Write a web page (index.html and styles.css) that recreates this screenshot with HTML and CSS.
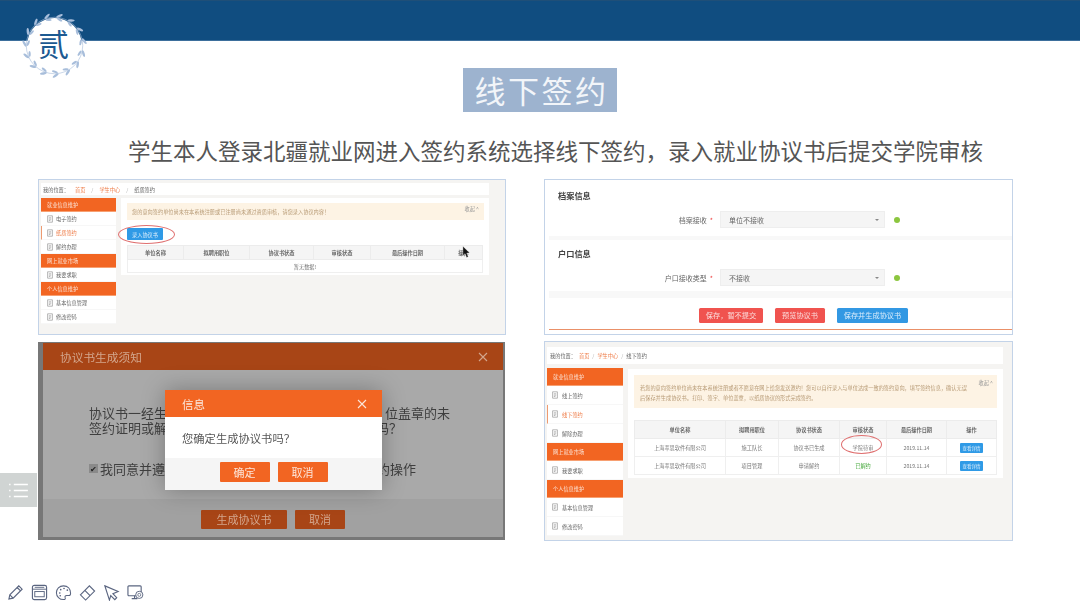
FILE: index.html
```html
<!DOCTYPE html>
<html lang="zh-CN">
<head>
<meta charset="utf-8">
<title>线下签约</title>
<link rel="stylesheet" href="styles.css">
</head>
<body>
<svg class="defs" width="0" height="0" aria-hidden="true">
  <defs>
    <symbol id="doc" viewBox="0 0 10 10"><path d="M2 1h6v8H2zM3.500 3.500h3M3.500 5.200h3M3.500 6.900h2" fill="none" stroke="#9a9a9a" stroke-width=".9"/></symbol>
    <symbol id="close" viewBox="0 0 10 10"><path d="M1 1l8 8M9 1l-8 8" fill="none" stroke="currentColor" stroke-width="1.100"/></symbol>
    <g id="leaves" fill="#a8bedb">
      <ellipse cx="37" cy="2.800" rx="3.400" ry="1.200" transform="rotate(-22 37 2.800)"/>
      <ellipse cx="37" cy="6.600" rx="3" ry="1.100" transform="rotate(28 37 6.600)"/>
    </g>
  </defs>
</svg>
<main class="slide">
  <header class="topbar"></header>
  <div class="badge">
    <svg class="wreath" viewBox="0 0 64 64" aria-hidden="true">
      <circle cx="32" cy="32" r="27" fill="#fff"/>
      <circle cx="32" cy="32" r="27.800" fill="none" stroke="#a8bedb" stroke-width=".6"/>
      <use href="#leaves"/>
      <use href="#leaves" transform="rotate(24 32 32)"/>
      <use href="#leaves" transform="rotate(48 32 32)"/>
      <use href="#leaves" transform="rotate(72 32 32)"/>
      <use href="#leaves" transform="rotate(96 32 32)"/>
      <use href="#leaves" transform="rotate(120 32 32)"/>
      <use href="#leaves" transform="rotate(144 32 32)"/>
      <use href="#leaves" transform="rotate(168 32 32)"/>
      <use href="#leaves" transform="rotate(192 32 32)"/>
      <use href="#leaves" transform="rotate(216 32 32)"/>
      <use href="#leaves" transform="rotate(240 32 32)"/>
      <use href="#leaves" transform="rotate(264 32 32)"/>
      <use href="#leaves" transform="rotate(288 32 32)"/>
      <use href="#leaves" transform="rotate(312 32 32)"/>
      <use href="#leaves" transform="rotate(336 32 32)"/>
    </svg>
    <span class="badge-text">贰</span>
  </div>

  <h1 class="title">线下签约</h1>
  <p class="subtitle">学生本人登录北疆就业网进入签约系统选择线下签约，录入就业协议书后提交学院审核</p>

  <section class="shots">
    <!-- 纸质签约 -->
    <article class="shot admin admin-a">
      <div class="crumb"><span>我的位置：</span><em>首页</em><i>/</i><em>学生中心</em><i>/</i><span>纸质签约</span></div>
      <div class="admin-body">
        <nav class="side">
          <h3>就业信息维护</h3>
          <a><svg><use href="#doc"/></svg>电子签约</a>
          <a class="on"><svg><use href="#doc"/></svg>纸质签约</a>
          <a><svg><use href="#doc"/></svg>解约办理</a>
          <h3>网上就业市场</h3>
          <a><svg><use href="#doc"/></svg>我要求职</a>
          <h3>个人信息维护</h3>
          <a><svg><use href="#doc"/></svg>基本信息管理</a>
          <a><svg><use href="#doc"/></svg>修改密码</a>
        </nav>
        <div class="card">
          <div class="notice"><p>您的意向签约单位尚未在本系统注册或已注册尚未通过资质审核，请您录入协议内容！</p><span>收起 ^</span></div>
          <button class="add">录入协议书</button>
          <table class="tbl">
            <thead><tr><th>单位名称</th><th>拟聘用职位</th><th>协议书状态</th><th>审核状态</th><th>最后操作日期</th><th>操作</th></tr></thead>
            <tbody><tr><td colspan="6">暂无数据!</td></tr></tbody>
          </table>
        </div>
      </div>
      <span class="ring ring-a"></span>
      <svg class="cursor" viewBox="0 0 10 14" aria-hidden="true"><path d="M1 0l0 10.500 2.400-2.200 1.700 4.200 1.900-.8-1.700-4 3.200-.2z" fill="#111" stroke="#fff" stroke-width=".4"/></svg>
    </article>

    <!-- 档案信息 / 户口信息 -->
    <article class="shot form">
      <div class="fsec fsec-a">
        <h4>档案信息</h4>
        <div class="frow">
          <label>档案接收<b>*</b></label>
          <div class="select"><span>单位不接收</span><i></i></div>
          <span class="ok"></span>
        </div>
      </div>
      <div class="fsec fsec-b">
        <h4>户口信息</h4>
        <div class="frow">
          <label>户口接收类型<b>*</b></label>
          <div class="select"><span>不接收</span><i></i></div>
          <span class="ok"></span>
        </div>
      </div>
      <div class="factions">
        <button class="fbtn red w1">保存，暂不提交</button>
        <button class="fbtn red w2">预览协议书</button>
        <button class="fbtn blue w3">保存并生成协议书</button>
      </div>
    </article>

    <!-- 协议书生成须知 -->
    <article class="shot modal-shot">
      <div class="modal">
        <div class="modal-head"><span>协议书生成须知</span><svg class="x"><use href="#close"/></svg></div>
        <div class="modal-body">
          <div class="mline l1"><span>协议书一经生</span><span>位盖章的未</span></div>
          <div class="mline l2"><span>签约证明或解</span><span>吗？</span></div>
          <div class="mline l3 agree"><span class="agree-left"><span class="check">✔</span>我同意并遵</span><span>约操作</span></div>
        </div>
        <div class="modal-foot"><button class="dim w86">生成协议书</button><button class="dim w50">取消</button></div>
      </div>
      <div class="dialog">
        <div class="dialog-head"><span>信息</span><svg class="x"><use href="#close"/></svg></div>
        <div class="dialog-body">您确定生成协议书吗？</div>
        <div class="dialog-foot"><button>确定</button><button>取消</button></div>
      </div>
    </article>

    <!-- 线下签约 -->
    <article class="shot admin admin-b">
      <div class="crumb"><span>我的位置：</span><em>首页</em><i>/</i><em>学生中心</em><i>/</i><span>线下签约</span></div>
      <div class="admin-body">
        <nav class="side">
          <h3>就业信息维护</h3>
          <a><svg><use href="#doc"/></svg>线上签约</a>
          <a class="on"><svg><use href="#doc"/></svg>线下签约</a>
          <a><svg><use href="#doc"/></svg>解除办理</a>
          <h3>网上就业市场</h3>
          <a><svg><use href="#doc"/></svg>我要求职</a>
          <h3>个人信息维护</h3>
          <a><svg><use href="#doc"/></svg>基本信息管理</a>
          <a><svg><use href="#doc"/></svg>修改密码</a>
        </nav>
        <div class="card">
          <div class="notice"><p>若您的意向签约单位尚未在本系统注册或者不愿意在网上给您发送邀约！您可以自行录入与单位达成一致的签约意向，填写签约信息，确认无误后保存并生成协议书。打印、签字、单位盖章，以纸质协议的形式完成签约。</p><span>收起 ^</span></div>
          <table class="tbl">
            <thead><tr><th>单位名称</th><th>拟聘用职位</th><th>协议书状态</th><th>审核状态</th><th>最后操作日期</th><th>操作</th></tr></thead>
            <tbody>
              <tr><td>上海萃思软件有限公司</td><td>施工队长</td><td>协议书已生成</td><td>学院待审</td><td>2019.11.14</td><td><button class="view">查看详情</button></td></tr>
              <tr><td>上海萃思软件有限公司</td><td>项目管理</td><td>申请解约</td><td class="green">已解约</td><td>2019.11.14</td><td><button class="view">查看详情</button></td></tr>
            </tbody>
          </table>
        </div>
      </div>
      <span class="ring ring-b"></span>
    </article>
  </section>

  <div class="tab" aria-hidden="true">
    <svg viewBox="0 0 20 16"><path d="M0 1.500h1.500M0 8h1.500M0 14.500h1.500M5 1.500h15M5 8h15M5 14.500h15" stroke="#fff" stroke-width="1.600" fill="none"/></svg>
  </div>

  <footer class="tools" aria-hidden="true">
    <svg viewBox="0 0 18 18"><path d="M2 16l1-4.500L12.500 2l3.500 3.500L6.500 15zM3 11.500L6.500 15M10.800 3.700l3.500 3.500" fill="none" stroke="#5a6580" stroke-width="1.200"/></svg>
    <svg viewBox="0 0 18 18"><rect x="1.500" y="1.500" width="15" height="15" rx="2" fill="none" stroke="#5a6580" stroke-width="1.200"/><path d="M1.500 5.500h15M4 3.500h10" stroke="#5a6580" fill="none"/><rect x="4" y="8" width="10" height="5.500" fill="none" stroke="#5a6580"/></svg>
    <svg viewBox="0 0 18 18"><path d="M9 2C4.500 2 1.500 5.200 1.500 9.200S4.800 16.500 9 16.500c2 0 2.200-1.200 1.700-2.300-.5-1.200.3-2 1.600-2h2.200c1.300 0 2-1 2-2.500C16.500 5 13.500 2 9 2z" fill="none" stroke="#5a6580" stroke-width="1.100"/><path d="M5 9.500h.1M6 6h.1M9.500 4.800h.1M13 6.500h.1M5.500 12.500h.1" stroke="#5a6580" stroke-width="1.700" stroke-linecap="round"/></svg>
    <svg viewBox="0 0 18 18"><path d="M1.500 11.500L11 2l5.500 5.500L7 17zM6.200 6.800l5.500 5.500" fill="none" stroke="#5a6580" stroke-width="1.200"/></svg>
    <svg viewBox="0 0 18 18"><path d="M2 2l14 6-5.500 2.200 4 4.300-2 2-4.300-4.300L6.800 17z" fill="none" stroke="#5a6580" stroke-width="1.200"/></svg>
    <svg viewBox="0 0 18 18"><rect x="1" y="2" width="14" height="10.500" rx="1" fill="none" stroke="#5a6580" stroke-width="1.200"/><path d="M8 12.500V15M5 15.500h6" stroke="#5a6580" stroke-width="1.200"/><circle cx="13" cy="11.500" r="3.800" fill="#fff" stroke="#5a6580"/><circle cx="13" cy="11.500" r="1.600" fill="none" stroke="#5a6580" stroke-width=".8"/></svg>
  </footer>
</main>
</body>
</html>
```
FILE: styles.css
```css
* { box-sizing: border-box; }
html, body { margin: 0; padding: 0; background: #fff; }
body { font-family: "Noto Sans CJK SC", "Liberation Sans", sans-serif; }
.defs { position: absolute; }

.slide { position: relative; width: 1080px; height: 608px; overflow: hidden; background: #fff; display: flex; flex-direction: column; }
.topbar { height: 41px; flex: none; background: #104d80; border-top: 1px solid #1f4f78; border-bottom: 1px solid #3d6f9c; }

.badge { position: absolute; left: 22px; top: 13px; width: 65px; height: 65px; display: flex; align-items: center; justify-content: center; }
.wreath { position: absolute; inset: 0; width: 100%; height: 100%; }
.badge-text { position: relative; font-size: 31px; font-weight: 400; line-height: 1; color: #1d5a92; top: -3px; left: -1px; }

.title { align-self: center; margin: 27px 0 0; width: 154px; height: 44px; background: #9db3cf; color: #f2f5f9; font-size: 31px; font-weight: 400; line-height: 44px; text-align: center; letter-spacing: 2.500px; padding-left: 3px; white-space: nowrap; }
.subtitle { margin: 23px 0 0 128px; height: 30px; font-size: 22.500px; line-height: 30px; color: #555; white-space: nowrap; }

.shots { margin: 14px 0 0 38px; display: grid; grid-template-columns: 468px 469px; grid-template-rows: 156px 200px; column-gap: 38px; row-gap: 6px; }
.shot { position: relative; border: 1px solid #c3d3e8; overflow: hidden; filter: blur(.45px); }

/* admin screens */
.admin { background: #f5f4f2; color: #666; font-size: 5.200px; }
.crumb { background: #fff; display: flex; align-items: center; gap: 3px; white-space: nowrap; }
.crumb em { font-style: normal; color: #ee7a45; }
.crumb i { font-style: normal; color: #aaa; }
.admin-body { display: flex; }
.side { flex: none; background: #fff; }
.side h3 { margin: 0; background: #f26522; color: #fbe4d8; font-size: 5.200px; font-weight: 400; display: flex; align-items: center; padding-left: 6px; border-bottom: 1px solid #f7a072; }
.side a { display: flex; align-items: center; gap: 2px; padding-left: 5px; border-bottom: 1px solid #f7f7f7; color: #666; }
.side a svg { width: 8px; height: 8px; flex: none; }
.side a.on { color: #ee7a45; border-left: 1px solid #ee9a70; padding-left: 4px; }
.card { background: #fff; }
.notice { position: relative; background: #fdf3e4; color: #b79a75; }
.notice p { margin: 0; }
.notice span { position: absolute; color: #999; }
.add { display: block; border: 0; padding: 0; border-radius: 1px; background: #2f9ae6; color: #e0f0fc; font: inherit; }
.tbl { border-collapse: collapse; table-layout: fixed; background: #fff; }
.tbl th { background: #f5f5f5; font-weight: 700; color: #666; border: 1px solid #ececec; padding: 0; }
.tbl td { text-align: center; border: 1px solid #efefef; padding: 0; color: #777; }
.tbl td.green { color: #3fa535; }
.view { display: inline-block; vertical-align: middle; border: 0; padding: 0; background: #2f9ae6; color: #d8ecfb; font: inherit; font-size: 4.500px; border-radius: 1px; }
.ring { position: absolute; border: 1px solid #df6f6f; border-radius: 50%; }

.admin-a { padding: 3px 16px 0 2px; }
.admin-a .crumb { height: 12px; padding-left: 2px; gap: 6px; }
.admin-a .admin-body { margin-top: 3px; gap: 5px; }
.admin-a .side { width: 75px; }
.admin-a .side h3 { height: 14px; }
.admin-a .side a { height: 14px; }
.admin-a .card { flex: 1; height: 77px; padding: 5px 5px 0 6px; }
.admin-a .notice { height: 17px; padding: 5px 0 0 5px; }
.admin-a .notice span { right: 5px; top: 2px; }
.admin-a .add { width: 36px; height: 12px; margin-top: 8px; }
.admin-a .tbl { width: 356px; margin-top: 5px; }
.admin-a .tbl th { height: 14px; }
.admin-a .tbl td { height: 13px; }
.admin-a .tbl th:nth-child(1) { width: 56px; }
.admin-a .tbl th:nth-child(2) { width: 66px; }
.admin-a .tbl th:nth-child(3) { width: 64px; }
.admin-a .tbl th:nth-child(4) { width: 57px; }
.admin-a .tbl th:nth-child(5) { width: 74px; }
.ring-a { left: 79px; top: 45px; width: 57px; height: 19px; }
.cursor { position: absolute; left: 423px; top: 66px; width: 9px; height: 13px; }

.admin-b { padding: 5px 9px 0 2px; }
.admin-b .crumb { height: 17px; padding-left: 3px; gap: 3px; }
.admin-b .admin-body { margin-top: 4px; gap: 5px; }
.admin-b .side { width: 76px; }
.admin-b .side h3 { height: 18px; }
.admin-b .side a { height: 19px; gap: 3px; padding-left: 4px; }
.admin-b .side a.on { padding-left: 3px; }
.admin-b .card { flex: 1; height: 109px; margin-top: 1px; padding: 6px 6px 0 6px; }
.admin-b .notice { height: 33px; padding: 8px 28px 0 6px; line-height: 10px; }
.admin-b .notice span { right: 4px; top: 3px; }
.admin-b .tbl { width: 363px; margin-top: 12px; }
.admin-b .tbl th { height: 18px; }
.admin-b .tbl td { height: 18px; }
.admin-b .tbl th:nth-child(1) { width: 91px; }
.admin-b .tbl th:nth-child(2) { width: 53px; }
.admin-b .tbl th:nth-child(3) { width: 61px; }
.admin-b .tbl th:nth-child(4) { width: 47px; }
.admin-b .tbl th:nth-child(5) { width: 60px; }
.admin-b .view { width: 23px; height: 10px; }
.ring-b { left: 296px; top: 93px; width: 41px; height: 19px; }

/* form screen */
.form { background: #fff; display: flex; flex-direction: column; padding: 2px 0 0 4px; color: #666; font-size: 7px; }
.fsec { background: #fff; padding: 8px 0 0 9px; border-bottom: 4px solid #f8f8f8; }
.fsec-a { height: 58px; }
.fsec-b { height: 58px; border-bottom-width: 7px; }
.fsec h4 { margin: 0; font-size: 8.200px; line-height: 10px; font-weight: 700; color: #444; }
.frow { display: flex; align-items: center; margin-top: 11px; }
.frow label { width: 162px; flex: none; text-align: right; padding-right: 7px; white-space: nowrap; }
.frow label b { color: #e44; font-weight: 400; margin-left: 3px; }
.select { width: 165px; height: 17px; background: #f5f5f5; border: 1px solid #eee; display: flex; align-items: center; justify-content: space-between; padding: 0 5px 0 8px; }
.select i { border: 2px solid transparent; border-top: 2px solid #888; border-bottom: 0; }
.ok { width: 6px; height: 6px; border-radius: 50%; background: #8cc63f; margin-left: 9px; }
.factions { height: 32px; padding: 10px 0 0 150px; display: flex; gap: 12px; border-bottom: 1px solid #ea9068; }
.fbtn { height: 15px; border: 0; padding: 0; border-radius: 1.500px; font: inherit; font-size: 7.200px; line-height: 15px; white-space: nowrap; }
.fbtn.red { background: #f0534f; color: #fbdcdc; }
.fbtn.blue { background: #3298e3; color: #d9ecfb; }
.w1 { width: 64px; }
.w2 { width: 50px; }
.w3 { width: 71px; }

/* modal screen */
.modal-shot { margin: 1px 1px 0 0; height: 198px; background: #777; border: 0; padding: 1px 2px 3px 5px; }
.modal { height: 100%; background: #a9a9a9; display: flex; flex-direction: column; color: #3f3f3f; }
.modal-head { height: 27px; flex: none; background: #a84516; color: #d3a68d; display: flex; align-items: center; justify-content: space-between; padding: 0 15px 0 17px; font-size: 11.700px; }
.x { width: 10px; height: 10px; color: inherit; }
.modal-body { flex: 1; padding: 35px 0 0 46px; font-size: 13px; line-height: 15px; white-space: nowrap; }
.mline { display: flex; justify-content: space-between; }
.l1 { width: 361px; }
.l2 { width: 313px; }
.l3 { width: 327px; margin-top: 26px; align-items: center; }
.agree-left { display: flex; align-items: center; gap: 2px; }
.check { width: 9px; height: 9px; background: #8a8a8a; font-size: 8px; line-height: 9px; text-align: center; color: #222; }
.modal-foot { height: 38px; flex: none; background: #a1a1a1; display: flex; justify-content: center; gap: 8px; padding: 11px 0 0 0; }
.dim { height: 19px; border: 0; padding: 0; border-radius: 1px; background: #a84516; color: #d3a68d; font: inherit; font-size: 11px; line-height: 19px; }
.w86 { width: 86px; }
.w50 { width: 50px; }
.dialog { position: absolute; left: 127px; top: 48px; width: 217px; height: 100px; background: #fff; display: flex; flex-direction: column; box-shadow: 0 0 22px rgba(0,0,0,.28); }
.dialog-head { height: 27px; flex: none; background: #f26522; color: #fbe6da; display: flex; align-items: center; justify-content: space-between; padding: 0 15px 0 17px; font-size: 11.500px; }
.dialog-body { height: 41px; flex: none; padding-left: 17px; display: flex; align-items: center; font-size: 11.300px; color: #555; white-space: nowrap; }
.dialog-foot { flex: 1; background: #f5f5f5; display: flex; justify-content: center; gap: 8px; padding-top: 4px; }
.dialog-foot button { width: 50px; height: 20px; border: 0; padding: 0; border-radius: 1px; background: #f26522; color: #fde5d8; font: inherit; font-size: 11px; line-height: 20px; }

/* slide chrome */
.tab { position: absolute; left: 0; top: 473px; width: 37px; height: 34px; background: #d0d4d3; display: flex; align-items: center; justify-content: center; }
.tab svg { width: 19px; height: 15px; margin-left: -1px; }
.tools { position: absolute; left: 7px; top: 584px; display: flex; gap: 7px; }
.tools svg { width: 17px; height: 17px; flex: none; }
```
